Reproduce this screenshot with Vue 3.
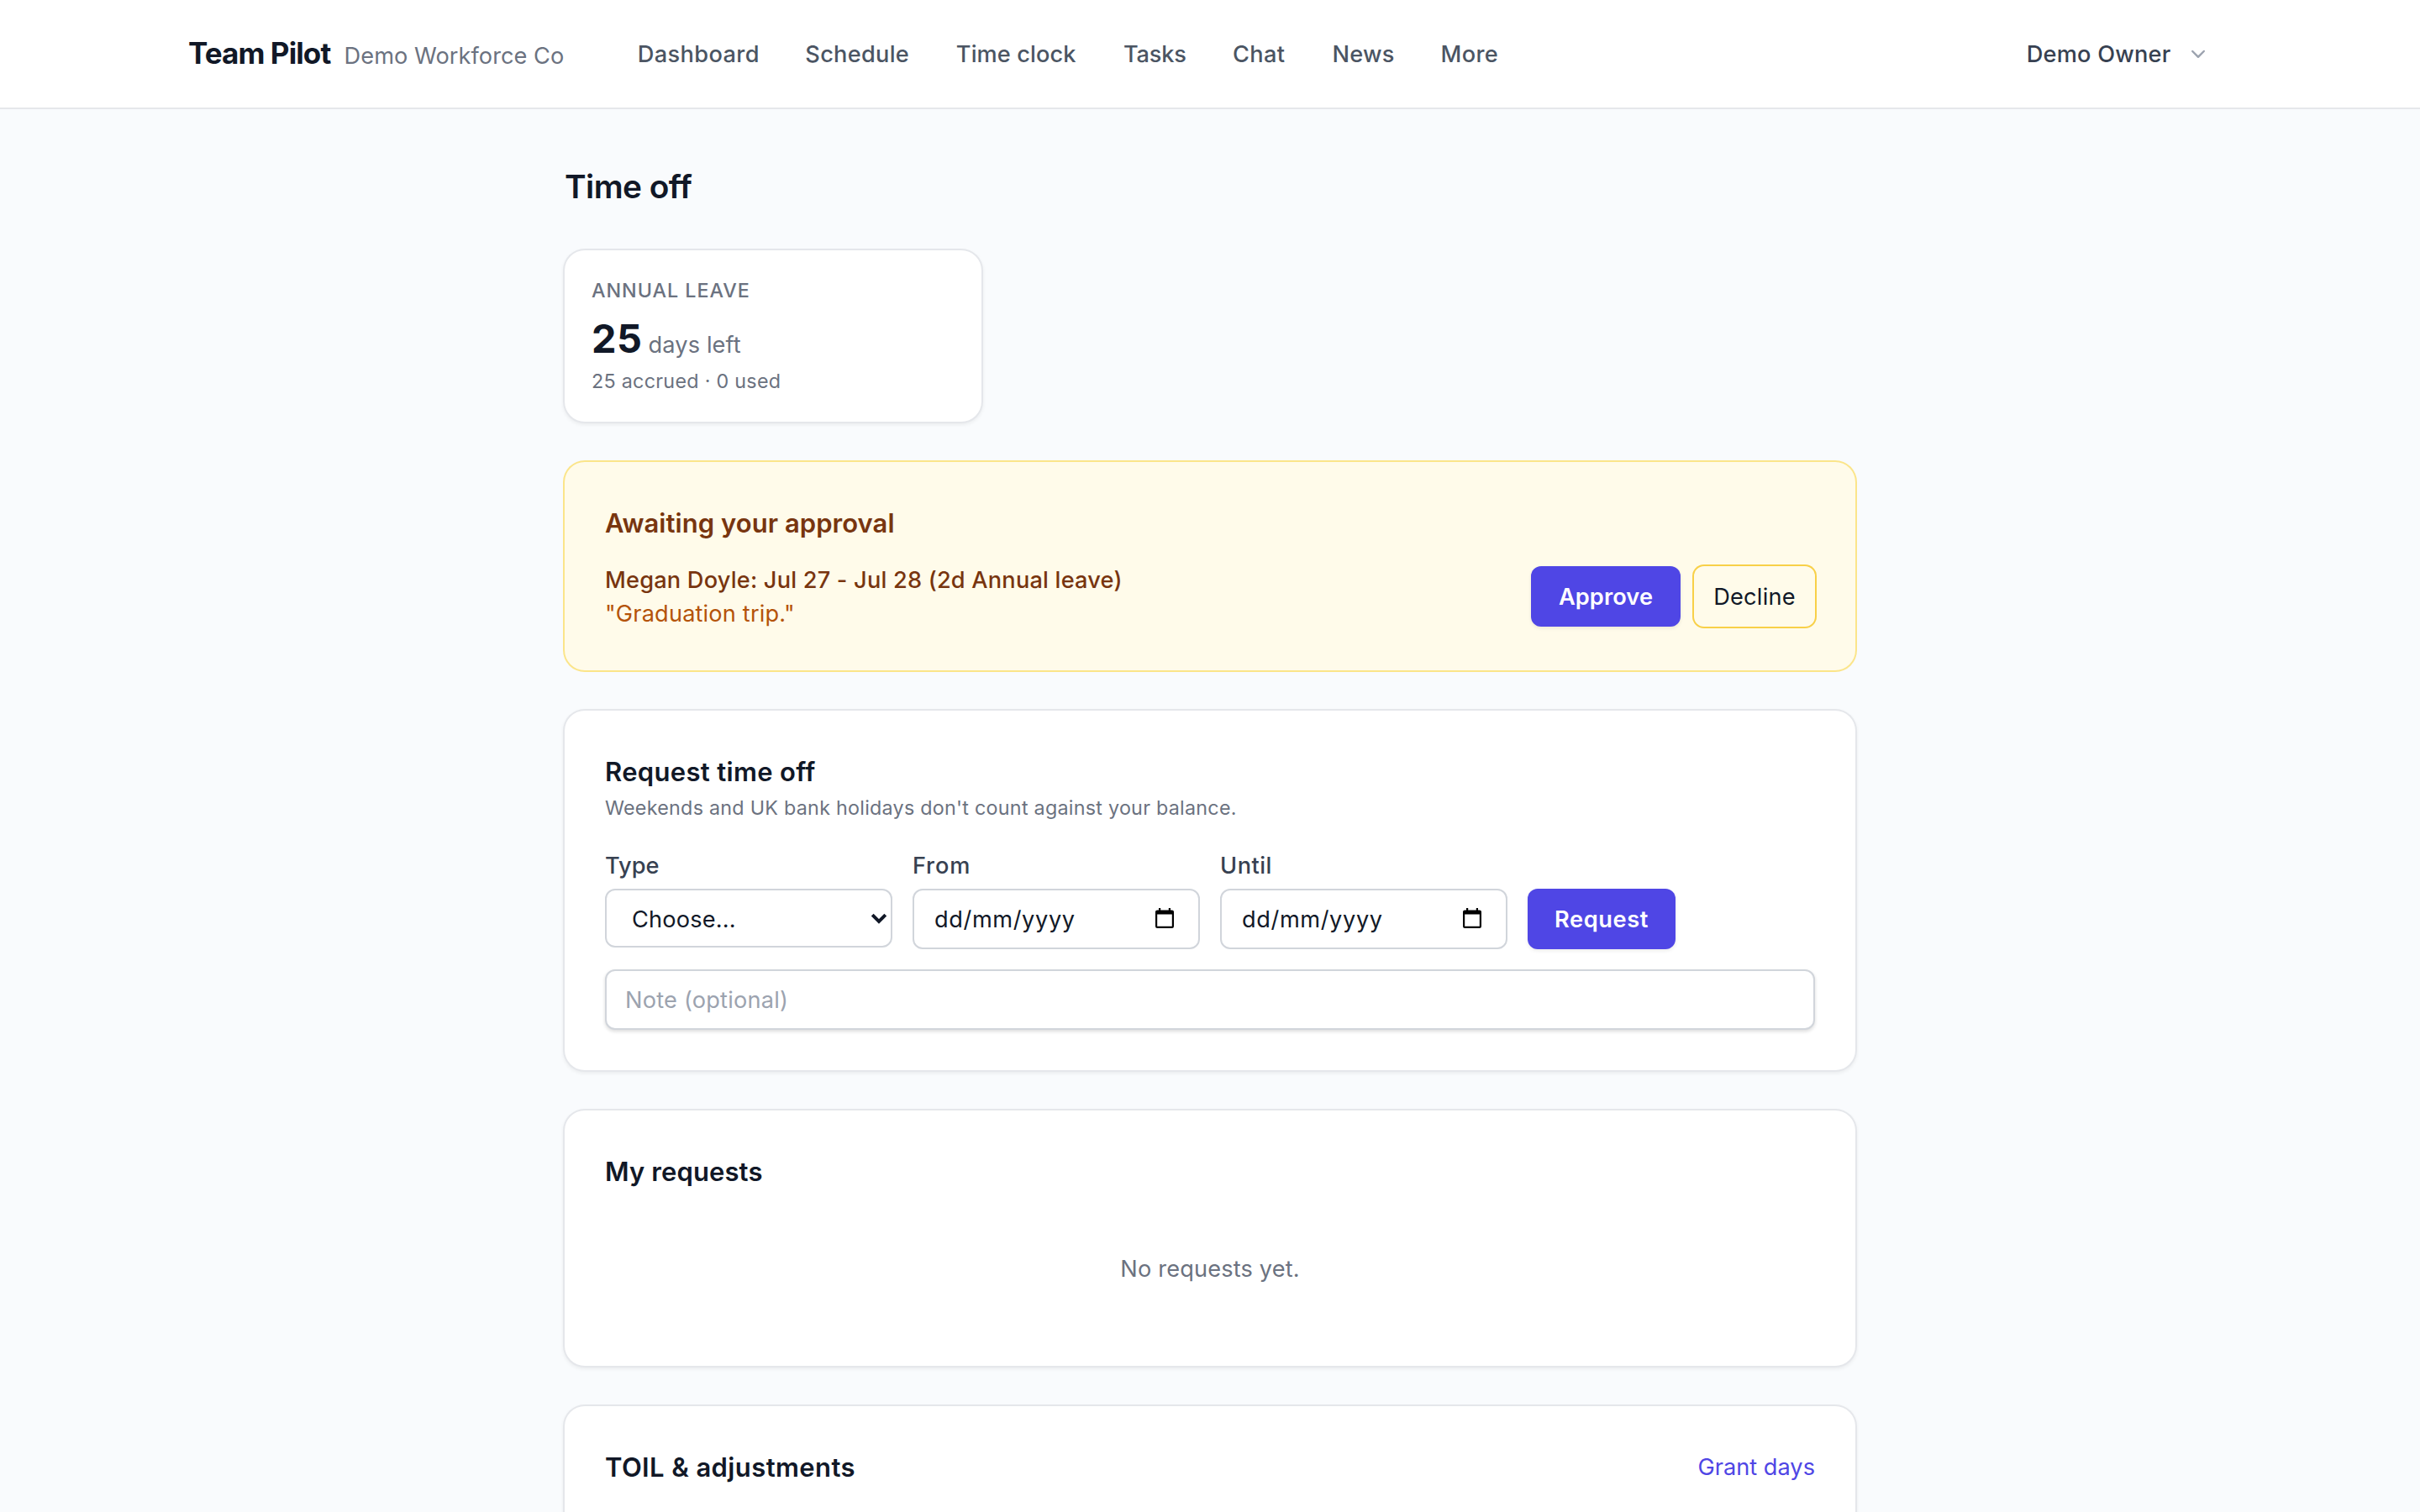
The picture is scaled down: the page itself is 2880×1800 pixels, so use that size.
<script setup>
const nav = [
  { label: 'Dashboard', key: 'dashboard' },
  { label: 'Schedule', key: 'schedule' },
  { label: 'Time clock', key: 'clock' },
  { label: 'Tasks', key: 'tasks' },
  { label: 'Chat', key: 'chat' },
  { label: 'News', key: 'news' },
  { label: 'More', key: 'more' },
]
const dates = [
  { label: 'From', key: 'from' },
  { label: 'Until', key: 'until' },
]
</script>

<template>
  <div class="page">
    <header class="topbar">
      <div class="topbar-inner">
        <div class="brand">
          <span class="brand-name">Team Pilot</span>
          <span class="brand-org">Demo Workforce Co</span>
        </div>
        <nav class="nav">
          <a v-for="n in nav" :key="n.key" class="nav-item" :class="n.key">{{ n.label }}</a>
        </nav>
        <button class="account">
          <span>Demo Owner</span>
          <svg class="chevron" viewBox="0 0 20 20" fill="currentColor">
            <path d="M5.22 8.22a.75.75 0 0 1 1.06 0L10 11.94l3.72-3.72a.75.75 0 1 1 1.06 1.06l-4.25 4.25a.75.75 0 0 1-1.06 0L5.22 9.28a.75.75 0 0 1 0-1.06Z" />
          </svg>
        </button>
      </div>
    </header>

    <main class="main">
      <h1 class="title">Time off</h1>

      <section class="balance">
        <div class="balance-label">ANNUAL LEAVE</div>
        <div class="balance-row"><span class="balance-value">25</span><span class="balance-unit">days left</span></div>
        <div class="balance-note">25 accrued · 0 used</div>
      </section>

      <section class="card approval">
        <h2 class="heading awaiting">Awaiting your approval</h2>
        <div class="approval-row">
          <div class="approval-text">
            <div class="approval-who">Megan Doyle: Jul 27 - Jul 28 (2d Annual leave)</div>
            <div class="approval-reason">"Graduation trip."</div>
          </div>
          <div class="approval-actions">
            <button class="primary approve">Approve</button>
            <button class="decline">Decline</button>
          </div>
        </div>
      </section>

      <section class="card">
        <h2 class="heading request-heading">Request time off</h2>
        <p class="hint">Weekends and UK bank holidays don't count against your balance.</p>
        <div class="form-row">
          <div class="field">
            <label class="type">Type</label>
            <div class="control select">
              <span>Choose...</span>
              <svg class="arrow" viewBox="0 0 20 14"><path d="M2.2 3.2 10 11l7.8-7.8" fill="none" stroke="currentColor" stroke-width="4" /></svg>
            </div>
          </div>
          <div v-for="d in dates" :key="d.key" class="field">
            <label :class="d.key">{{ d.label }}</label>
            <div class="control date">
              <span>dd/mm/yyyy</span>
              <svg class="calendar" viewBox="0 0 22 24">
                <path fill-rule="evenodd" d="M4 0h2.2v2.4h9.6V0H18v2.4h1.8A2.2 2.2 0 0 1 22 4.6v17.2a2.2 2.2 0 0 1-2.2 2.2H2.2A2.2 2.2 0 0 1 0 21.8V4.6a2.2 2.2 0 0 1 2.2-2.2H4ZM2.2 7.4v14.4h17.6V7.4Z" />
              </svg>
            </div>
          </div>
          <button class="primary request">Request</button>
        </div>
        <div class="note">Note (optional)</div>
      </section>

      <section class="card">
        <h2 class="heading mine">My requests</h2>
        <p class="empty">No requests yet.</p>
      </section>

      <section class="card toil">
        <h2 class="heading toil-heading">TOIL &amp; adjustments</h2>
        <a class="grant">Grant days</a>
      </section>
    </main>
  </div>
</template>

<style>
html,
body {
  margin: 0;
  background: #f9fbfd;
}
</style>

<style scoped>
.page {
  width: 2880px;
  height: 1800px;
  overflow: hidden;
  background: #f9fbfd;
  color: #111827;
  font-family: Inter, 'Liberation Sans', sans-serif;
  font-size: 27.2px;
  line-height: 40px;
}
h1, h2, p { margin: 0; font-weight: inherit; }
button {
  border: 0;
  padding: 0;
  background: none;
  font: inherit;
  color: inherit;
}
span, a, label, h1, h2, div { white-space: nowrap; }

.topbar {
  height: 128px;
  background: #fff;
  border-bottom: 2px solid #e5e7eb;
}
.topbar-inner {
  display: flex;
  align-items: center;
  width: 2432px;
  height: 128px;
  margin: 0 auto;
}
.brand {
  display: flex;
  align-items: baseline;
  width: 534.8px;
  padding-bottom: 2px;
}
.brand-name {
  width: 185.6px;
  font-size: 35px;
  font-weight: 700;
  line-height: 56px;
  letter-spacing: -0.9px;
}
.brand-org { color: #6b7280; letter-spacing: 0.04px; }
.nav { display: flex; padding-top: 2px; font-weight: 470; color: #4b5563; }
.dashboard { width: 199.5px; letter-spacing: 0.36px; }
.schedule { width: 179.5px; letter-spacing: 0.27px; }
.clock { width: 199.2px; letter-spacing: 0.1px; }
.tasks { width: 130px; letter-spacing: -0.2px; }
.chat { width: 118.5px; letter-spacing: 0.33px; }
.news { width: 129px; letter-spacing: 0.23px; }
.more { letter-spacing: 0.37px; }
.account {
  display: flex;
  align-items: center;
  gap: 16.5px;
  margin-left: auto;
  margin-right: 24px;
  color: #374151;
  font-weight: 470;
  letter-spacing: 0.22px;
}
.account span { padding-top: 2px; }
.chevron { width: 32px; height: 32px; margin-top: -2px; color: #9ca3af; }

.main {
  width: 1536px;
  margin: 0 auto;
  padding-top: 64px;
}
.title {
  font-size: 38.8px;
  font-weight: 600;
  line-height: 56px;
  letter-spacing: -0.55px;
}
.balance {
  box-sizing: border-box;
  width: 496px;
  height: 204px;
  margin-top: 48px;
  padding: 32px;
}
.balance, .card {
  border-radius: 24px;
  background: #fff;
  box-shadow: 0 0 0 2px #e5e7eb, 0 2px 4px 2px rgb(0 0 0 / 0.06);
}
.balance-label {
  color: #6b7280;
  font-size: 23.3px;
  font-weight: 500;
  line-height: 32px;
  letter-spacing: 0.98px;
}
.balance-row {
  display: flex;
  align-items: baseline;
  height: 64px;
  margin-top: 9px;
}
.balance-value {
  width: 67.6px;
  font-size: 46.8px;
  font-weight: 700;
  line-height: 64px;
  letter-spacing: 0.6px;
}
.balance-unit { color: #6b7280; letter-spacing: 0.1px; }
.balance-note {
  margin-top: 3px;
  color: #6b7280;
  font-size: 23.3px;
  line-height: 32px;
  letter-spacing: 0.28px;
}

.card { margin-top: 48px; padding: 48px; }
.approval {
  background: #fffbea;
  box-shadow: 0 0 0 2px #fbe58a;
}
.heading {
  padding-top: 2px;
  font-size: 31px;
  font-weight: 600;
  line-height: 46px;
}
.awaiting { color: #78350f; letter-spacing: 0.05px; }
.approval-row {
  display: flex;
  justify-content: space-between;
  align-items: center;
  height: 80px;
  margin-top: 24px;
}
.approval-text { padding-top: 2px; }
.approval-who { color: #78350f; font-weight: 470; letter-spacing: 0.2px; }
.approval-reason { color: #b45309; letter-spacing: 0.16px; }
.approval-actions { display: flex; gap: 16px; }
.primary, .decline { padding-top: 2px; }
.primary {
  height: 72px;
  border-radius: 12px;
  background: #4f46e5;
  color: #fff;
  font-weight: 600;
  box-shadow: 0 2px 4px rgb(0 0 0 / 0.08);
}
.approve { width: 178px; letter-spacing: 0.1px; }
.decline {
  width: 144px;
  height: 72px;
  border-radius: 12px;
  box-shadow: 0 0 0 2px #f8d048;
  letter-spacing: 0.2px;
}

.request-heading { letter-spacing: 0.33px; }
.hint {
  margin-top: 4px;
  color: #6b7280;
  font-size: 23.3px;
  line-height: 32px;
  letter-spacing: 0.26px;
}
.form-row {
  display: flex;
  align-items: flex-start;
  gap: 24px;
  margin-top: 32px;
}
.field { width: 342px; }
.field label {
  display: block;
  padding-top: 2px;
  color: #374151;
  font-weight: 470;
  line-height: 38px;
}
.from { letter-spacing: 0.8px; }
.until { letter-spacing: 0.5px; }
.control {
  box-sizing: border-box;
  display: flex;
  align-items: center;
  justify-content: space-between;
  height: 72px;
  margin-top: 8px;
  border: 2px solid #d1d5db;
  border-radius: 12px;
  background: #fff;
}
.select {
  height: 70px;
  padding: 0 4px 0 30px;
  letter-spacing: 0.18px;
}
.select span { padding-top: 4px; }
.arrow { width: 20px; height: 14px; margin-top: -1px; }
.date {
  padding: 0 29px 0 24px;
  letter-spacing: 0.6px;
}
.date span { padding-top: 2px; }
.calendar { width: 22px; height: 24px; margin-top: -2px; color: #000; }
.request {
  width: 176px;
  margin-top: 48px;
  letter-spacing: 0.6px;
}
.note {
  box-sizing: border-box;
  height: 72px;
  margin-top: 24px;
  padding-left: 22px;
  border: 2px solid #d1d5db;
  border-radius: 12px;
  background: #fff;
  box-shadow: 0 2px 4px rgb(0 0 0 / 0.14);
  color: #9ca3af;
  line-height: 70px;
  letter-spacing: 0.2px;
}
.mine { letter-spacing: 0.12px; }
.empty {
  margin-top: 24px;
  padding: 49px 0 47px;
  color: #6b7280;
  text-align: center;
  letter-spacing: 0.15px;
}
.toil {
  display: flex;
  align-items: center;
  justify-content: space-between;
  padding-bottom: 120px;
}
.toil-heading { letter-spacing: 0.4px; }
.grant { padding-top: 2px; color: #4f46e5; }
</style>
